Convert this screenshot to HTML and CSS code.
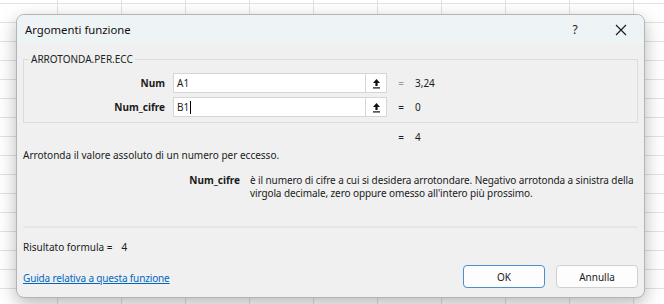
FILE: index.html
```html
<!DOCTYPE html>
<html>
<head>
    <title>Argomenti funzione</title>
    <link rel="stylesheet" href="styles.css">
</head>
<body>

<div class="dialog">
    <div class="titlebar">
        <span class="title">Argomenti funzione</span>
        <span class="help">?</span>
        <span class="close">
            <svg width="12" height="12" viewBox="0 0 12 12"><path d="M1 1 L11 11 M11 1 L1 11" stroke="#1a1a1a" stroke-width="1.1" fill="none"/></svg>
        </span>
    </div>

    <div class="content">
        <fieldset class="group">
            <legend>ARROTONDA.PER.ECC</legend>
            <div class="args">
                <label class="arg-name">Num</label>
                <div class="ref">
                    <span class="ref-text">A1</span>
                    <span class="ref-btn"><svg width="11" height="11" viewBox="0 0 11 11"><path d="M5.5 1 L9 5 H6.6 V8 H4.4 V5 H2 Z" fill="#111"/><rect x="2" y="9.3" width="7" height="1.2" fill="#111"/></svg></span>
                </div>
                <span class="eq dim">=</span>
                <span class="val">3,24</span>

                <label class="arg-name">Num_cifre</label>
                <div class="ref">
                    <span class="ref-text">B1<span class="caret"></span></span>
                    <span class="ref-btn"><svg width="11" height="11" viewBox="0 0 11 11"><path d="M5.5 1 L9 5 H6.6 V8 H4.4 V5 H2 Z" fill="#111"/><rect x="2" y="9.3" width="7" height="1.2" fill="#111"/></svg></span>
                </div>
                <span class="eq">=</span>
                <span class="val">0</span>
            </div>
        </fieldset>

        <div class="result-line">
            <span class="eq">=</span>
            <span class="val">4</span>
        </div>

        <p class="summary">Arrotonda il valore assoluto di un numero per eccesso.</p>

        <div class="arg-help">
            <b>Num_cifre</b>
            <span class="arg-desc">è il numero di cifre a cui si desidera arrotondare. Negativo arrotonda a sinistra della virgola decimale, zero oppure omesso all'intero più prossimo.</span>
        </div>

        <div class="separator"></div>

        <div class="formula">Risultato formula =<span class="formula-val">4</span></div>

        <div class="footer">
            <a href="#" class="help-link">Guida relativa a questa funzione</a>
            <div class="buttons">
                <button class="btn default">OK</button>
                <button class="btn">Annulla</button>
            </div>
        </div>
    </div>
</div>

</body>
</html>
```

FILE: styles.css
```css
BODY {
    margin: 0;
    width: 664px;
    height: 304px;
    overflow: hidden;
    background-color: #fff;
    background-image:
        linear-gradient(to right, #e2e2e2 1px, transparent 1px),
        linear-gradient(to bottom, #e2e2e2 1px, transparent 1px);
    background-size: 64px 19px;
    background-position: 57px 3px;
    font-family: "Noto Sans", sans-serif;
    font-size: 10px;
    line-height: 16px;
    color: #1b1b1b;
}

.dialog {
    margin: 14px 0 0 16px;
    width: 627px;
    height: 282px;
    background: #f0f0f0;
    border: 1px solid #b4b4b4;
    border-radius: 8px;
    box-shadow: 0 6px 18px rgba(0, 0, 0, 0.28);
    overflow: hidden;
    display: flex;
    flex-direction: column;
}

.titlebar {
    height: 29px;
    background: #eef3f6;
    display: flex;
    align-items: center;
    padding-left: 8px;
}
.title {
    flex: 1;
    font-size: 11.3px;
    color: #111;
}
.help {
    width: 46px;
    text-align: center;
    font-size: 12px;
}
.close {
    width: 46px;
    display: flex;
    justify-content: center;
}

.content {
    padding: 0 6px;
    flex: 1;
}

.group {
    margin: 7px 0 0 0;
    padding: 0;
    border: 1px solid #dcdcdc;
    height: 72px;
    box-sizing: border-box;
}
.group LEGEND {
    margin-left: 5px;
    padding: 0 2px;
    line-height: 16px;
    color: #222;
}

.args {
    display: grid;
    grid-template-columns: 141px 214px 12px auto;
    column-gap: 8px;
    row-gap: 4px;
    align-items: center;
    margin-top: 6px;
}
.arg-name {
    text-align: right;
    font-weight: bold;
}
.ref {
    height: 20px;
    background: #fff;
    border: 1px solid #d6d6d6;
    box-sizing: border-box;
    display: flex;
    align-items: center;
}
.ref-text {
    flex: 1;
    padding-left: 3px;
    display: flex;
    align-items: center;
}
.caret {
    display: inline-block;
    width: 1px;
    height: 13px;
    background: #000;
    margin-left: 1px;
}
.ref-btn {
    width: 20px;
    height: 18px;
    border-left: 1px solid #d6d6d6;
    display: flex;
    align-items: center;
    justify-content: center;
}
.eq {
    text-align: center;
}
.dim {
    color: #9a9a9a;
}

.result-line {
    display: grid;
    grid-template-columns: 12px auto;
    column-gap: 8px;
    margin: 6px 0 0 372px;
}

.summary {
    margin: 2px 0 0 0;
}

.arg-help {
    display: grid;
    grid-template-columns: 217px 1fr;
    column-gap: 10px;
    margin-top: 11px;
    line-height: 13px;
}
.arg-help B {
    text-align: right;
}
.arg-desc {
    letter-spacing: -0.1px;
}

.separator {
    height: 2px;
    background: #e6e6e6;
    margin-top: 26px;
}

.formula {
    margin-top: 11px;
}
.formula-val {
    margin-left: 9px;
}

.footer {
    display: flex;
    align-items: center;
    justify-content: space-between;
    margin-top: 10px;
}
.help-link {
    color: #0067c0;
    text-decoration: underline;
    letter-spacing: -0.15px;
    padding-top: 3px;
}
.buttons {
    display: flex;
    gap: 11px;
}
.btn {
    width: 82px;
    height: 23px;
    font-family: "Noto Sans", sans-serif;
    font-size: 10px;
    color: #1b1b1b;
    background: #fdfdfd;
    border: 1px solid #d0d0d0;
    border-radius: 4px;
}
.btn.default {
    border-color: #4a8ed0;
}
```
